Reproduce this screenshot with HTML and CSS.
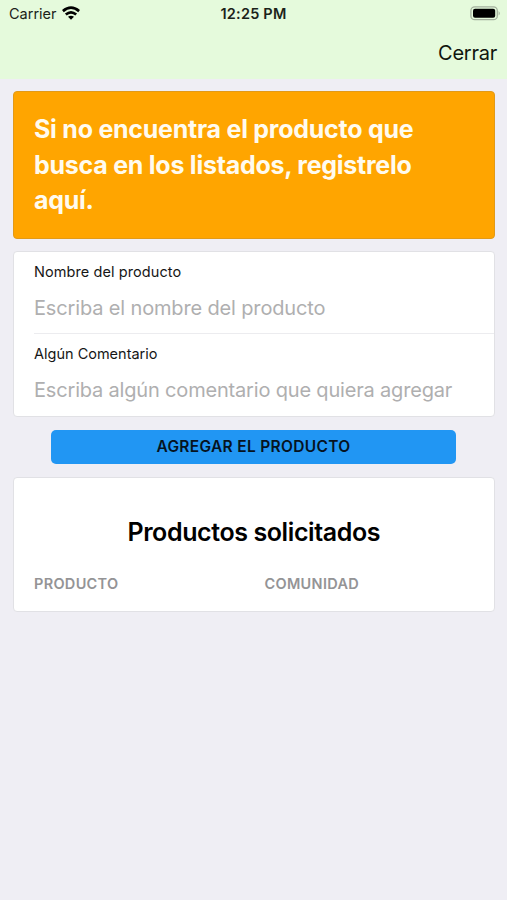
FILE: index.html
```html
<!DOCTYPE html>
<html lang="es">
<head>
<meta charset="utf-8">
<title>Registrar producto</title>
<link rel="stylesheet" href="styles.css">
</head>
<body>
<header class="top">
  <div class="status">
    <div class="carrier"><span class="carrier-name">Carrier</span>
      <svg class="wifi" width="18" height="14" viewBox="0 0 18 14"><g fill="none" stroke="#000" stroke-width="2.7"><path d="M.9 5.1Q9 -1.7 17.1 5.1"/><path d="M3.8 8.5Q9 4.2 14.2 8.5"/></g><path d="M6 10.8Q9 8.6 12 10.8L9 13.8Z"/></svg>
    </div>
    <div class="clock"><span>12:25 PM</span></div>
    <div class="power"><svg width="31" height="15" viewBox="0 0 31 15"><rect x=".9" y=".9" width="26.4" height="12.8" rx="3.8" fill="none" stroke="#a3b09d" stroke-width="1.3"/><rect x="3" y="2.8" width="22.2" height="9" rx="2"/><path d="M28.6 5q2.4 2.3 0 4.6z" fill="#a3b09d"/></svg></div>
  </div>
  <nav class="nav"><span class="close">Cerrar</span></nav>
</header>
<main>
  <section class="card notice">
    <div><span>Si no encuentra el producto que</span></div>
    <div><span>busca en los listados, registrelo</span></div>
    <div><span>aquí.</span></div>
  </section>
  <section class="card form">
    <div class="field"><label class="l1">Nombre del producto</label><span class="hint h1">Escriba el nombre del producto</span></div>
    <div class="field"><label class="l2">Algún Comentario</label><span class="hint h2">Escriba algún comentario que quiera agregar</span></div>
  </section>
  <button class="add"><span>AGREGAR EL PRODUCTO</span></button>
  <section class="card list">
    <h2><span>Productos solicitados</span></h2>
    <div class="cols"><span class="c1">PRODUCTO</span><span class="c2">COMUNIDAD</span></div>
  </section>
</main>
</body>
</html>
```
FILE: styles.css
```css
* { box-sizing: border-box; }
body { margin: 0; min-height: 900px; background: #efeef4; color: #000; font-family: Inter, sans-serif; }
.top { height: 79px; background: #e5fadc; }
.status { display: grid; grid-template-columns: 1fr auto 1fr; height: 27px; align-items: center; padding: 0 6px 0 6px; font-size: 14.5px; color: #1b2219; }
.carrier { display: flex; align-items: center; gap: 5px; padding-left: 3px; }
.wifi { margin-top: -1px; }
.clock { font-weight: 600; font-size: 14.5px; letter-spacing: .22px; }
.power { display: flex; justify-content: flex-end; }
.power svg { margin-top: -1px; }
.nav { display: flex; justify-content: flex-end; height: 51px; align-items: center; padding-right: 10px; font-size: 20px; letter-spacing: -.25px; color: #10150e; }
main { padding: 12px 12.5px 0 13px; display: flex; flex-direction: column; }
.card { background: #fff; border: 1px solid #e1e1e5; border-radius: 4px; }
.notice { height: 148px; padding: 20px; background: #ffa500; border-color: #e29a18; color: #fffbef; font-size: 25px; line-height: 35.5px; font-weight: 650; letter-spacing: -.25px; white-space: nowrap; }
.form { height: 166px; margin-top: 12px; padding-left: 20px; }
.field { display: flex; flex-direction: column; align-items: flex-start; height: 81px; padding-top: 10px; }
.field + .field { height: 82px; border-top: 1px solid #ececef; }
label { font-size: 14.5px; line-height: 20px; letter-spacing: .08px; color: #161616; }
.l2 { letter-spacing: 0; }
.hint { color: #afafb0; font-size: 20px; line-height: 28px; margin-top: 12px; white-space: nowrap; letter-spacing: -.15px; }
.h2 { letter-spacing: -.18px; }
.add { width: 405px; height: 34px; margin: 13px 0 0 38px; padding: 0 0 2px; border: 0; border-radius: 5px; background: #2196f3; color: #06131f; font: 600 15.5px Inter, sans-serif; letter-spacing: .32px; }
.list { height: 135px; margin-top: 13px; padding: 37px 20px 0; }
h2 { margin: 0; text-align: center; font-size: 25px; line-height: 34px; font-weight: 600; letter-spacing: -.4px; }
.cols { display: grid; grid-template-columns: 230.5px 1fr; justify-items: start; margin-top: 25px; color: #949496; font-size: 14.5px; font-weight: 570; line-height: 20px; letter-spacing: .3px; }
```
